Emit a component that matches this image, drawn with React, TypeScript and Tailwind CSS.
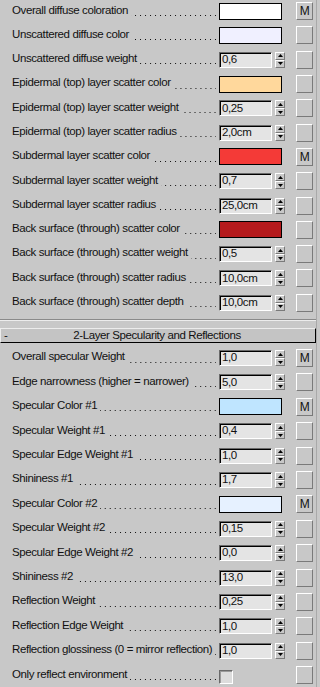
type Row = {
  label: string
  color?: string
  value?: string
  m?: boolean
  check?: boolean
}

const diffuse: Row[] = [
  { label: 'Overall diffuse coloration', color: '#ffffff', m: true },
  { label: 'Unscattered diffuse color', color: '#f0f0ff' },
  { label: 'Unscattered diffuse weight', value: '0,6' },
  { label: 'Epidermal (top) layer scatter color', color: '#ffd89c' },
  { label: 'Epidermal (top) layer scatter weight', value: '0,25' },
  { label: 'Epidermal (top) layer scatter radius', value: '2,0cm' },
  { label: 'Subdermal layer scatter color', color: '#f43a37', m: true },
  { label: 'Subdermal layer scatter weight', value: '0,7' },
  { label: 'Subdermal layer scatter radius', value: '25,0cm' },
  { label: 'Back surface (through) scatter color', color: '#b51a1c' },
  { label: 'Back surface (through) scatter weight', value: '0,5' },
  { label: 'Back surface (through) scatter radius', value: '10,0cm' },
  { label: 'Back surface (through) scatter depth', value: '10,0cm' },
]

const specular: Row[] = [
  { label: 'Overall specular Weight', value: '1,0', m: true },
  { label: 'Edge narrowness (higher = narrower)', value: '5,0' },
  { label: 'Specular Color #1', color: '#bfe5ff', m: true },
  { label: 'Specular Weight #1', value: '0,4' },
  { label: 'Specular Edge Weight #1', value: '1,0' },
  { label: 'Shininess #1', value: '1,7' },
  { label: 'Specular Color #2', color: '#e6f1ff', m: true },
  { label: 'Specular Weight #2', value: '0,15' },
  { label: 'Specular Edge Weight #2', value: '0,0' },
  { label: 'Shininess #2', value: '13,0' },
  { label: 'Reflection Weight', value: '0,25' },
  { label: 'Reflection Edge Weight', value: '1,0' },
  { label: 'Reflection glossiness (0 = mirror reflection)', value: '1,0' },
  { label: 'Only reflect environment', check: true },
]

function Spinner() {
  return (
    <div className="ml-[3px] flex h-[16px] w-[10px] flex-col">
      <div className="flex h-[8px] items-center justify-center border border-t-white border-l-white border-r-[#7a7a7a] border-b-[#7a7a7a]">
        <svg width="5" height="3" viewBox="0 0 5 3">
          <path d="M2.5 0 L5 3 L0 3 Z" fill="#000" />
        </svg>
      </div>
      <div className="flex h-[8px] items-center justify-center border border-t-white border-l-white border-r-[#7a7a7a] border-b-[#7a7a7a]">
        <svg width="5" height="3" viewBox="0 0 5 3">
          <path d="M0 0 L5 0 L2.5 3 Z" fill="#000" />
        </svg>
      </div>
    </div>
  )
}

function ParamRow({ row, h }: { row: Row; h: string }) {
  return (
    <div className={`flex items-center pl-[12px] ${h}`}>
      {/* label + dot leader */}
      <div className="mb-[2px] flex w-[204px] items-end whitespace-nowrap">
        <span className="shrink-0">{row.label}</span>
        <div className="mb-[3px] ml-[3px] h-px flex-1 bg-[linear-gradient(to_left,#111_1px,transparent_1px)] bg-[length:5px_1px] bg-right bg-repeat-x" />
      </div>

      <div className="ml-[3px] flex w-[66px] items-center">
        {row.color && (
          <div className="h-[17px] w-[63px] border border-black" style={{ background: row.color }} />
        )}
        {row.value && (
          <>
            <div className="flex h-[16px] w-[53px] items-center border border-t-[#6a6a6a] border-l-[#6a6a6a] border-r-white border-b-white bg-[#e4e4e4] pl-[2px] leading-none shadow-[inset_1px_1px_0_#000]">
              {row.value}
            </div>
            <Spinner />
          </>
        )}
        {row.check && (
          <div className="mt-[3px] h-[14px] w-[14px] border border-t-[#6a6a6a] border-l-[#6a6a6a] border-r-white border-b-white bg-[#dcdcdc] shadow-[inset_1px_1px_0_#9a9a9a]" />
        )}
      </div>

      <div className="ml-[11px] flex h-[18px] w-[17px] items-center justify-center border border-t-white border-l-white border-r-[#7a7a7a] border-b-[#7a7a7a] text-[12px] leading-none">
        {row.m ? 'M' : ''}
      </div>
    </div>
  )
}

export default function App() {
  return (
    <div className="relative h-[687px] w-[320px] overflow-hidden bg-[#c8c8c8] font-['Liberation_Sans',Arial,sans-serif] text-[11.5px] tracking-[-0.4px] text-[#111]">
      <div className="w-[317px] border-r border-r-[#a9a9a9]">
        {/* Diffuse / scatter rollout */}
        <div className="mt-[-1px]">
          {diffuse.map((row, i) => (
            <ParamRow key={i} row={row} h="h-[24.3px]" />
          ))}
        </div>

        {/* divider */}
        <div className="mt-[4px] h-px w-[316px] bg-[#8a8a8a]" />
        <div className="h-px w-[316px] bg-[#ececec]" />

        {/* Rollout header */}
        <div className="mt-[7px] flex h-[15px] w-[316px] items-center border border-t-[#ececec] border-l-[#ececec] border-r-black border-b-black bg-[#c4c4c4] leading-none">
          <span className="w-[12px] pl-[3px]">-</span>
          <span className="flex-1 pr-[14px] text-center">2-Layer Specularity and Reflections</span>
        </div>

        {/* Specular rollout */}
        <div className="mt-[3px]">
          {specular.map((row, i) => (
            <ParamRow key={i} row={row} h="h-[24.4px]" />
          ))}
        </div>

        <div className="h-px w-[316px] bg-[#8a8a8a]" />
        <div className="h-px w-[316px] bg-[#ececec]" />
      </div>
    </div>
  )
}
